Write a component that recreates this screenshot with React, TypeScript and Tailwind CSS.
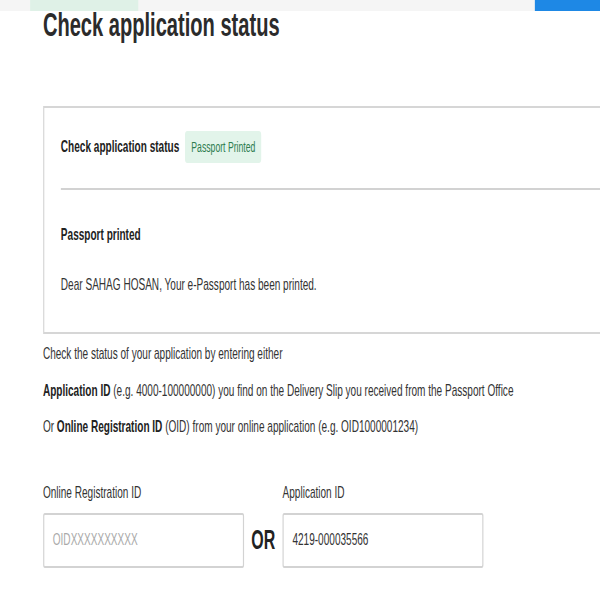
import React from "react";

export default function App() {
  return (
    <div className="w-[600px] h-[600px] overflow-hidden bg-white font-['Liberation_Sans',Arial,sans-serif]">
      <div className="w-[1016px] origin-top-left scale-x-[0.591] text-[17px] text-[#333]">
        {/* top bar */}
        <div className="relative z-10 flex h-[11px] bg-[#f5f5f5]">
          <div className="ml-[51px] w-[183px] bg-[#dff1e7]" />
          <div className="flex-1" />
          <div className="w-[111px] bg-[#1e88e5]" />
        </div>

        <div className="pl-[72.6px]">
          <h1 className="mt-[-4.3px] text-[34px] leading-[34px] font-bold text-[#2b2b2b]">
            Check application status
          </h1>

          {/* card */}
          <div className="mt-[65.3px] w-[1020px] border-2 border-[#d6d6d6] pl-[28.4px] pt-[23px] pb-[37px]">
            <div className="flex items-center gap-[10.2px]">
              <span className="font-bold text-[#222] leading-5">Check application status</span>
              <span className="flex h-[32px] items-center rounded-[4px] bg-[#e2f4ea] px-[10.2px] text-[14.7px] text-[#2e7d4f]">
                Passport Printed
              </span>
            </div>
            <div className="mt-[25px] h-[2px] bg-[#d2d2d2]" />
            <div className="mt-[35px] font-bold text-[#222] leading-5">Passport printed</div>
            <div className="mt-[30px] leading-5">Dear SAHAG HOSAN, Your e-Passport has been printed.</div>
          </div>

          {/* instructions */}
          <div className="mt-[2px] leading-[36.5px]">
            <div>Check the status of your application by entering either</div>
            <div>
              <span className="font-bold text-[#222]">Application ID</span> (e.g. 4000-100000000) you find on the Delivery Slip you received from the Passport Office
            </div>
            <div>
              Or <span className="font-bold text-[#222]">Online Registration ID</span> (OID) from your online application (e.g. OID1000001234)
            </div>
          </div>

          {/* inputs */}
          <div className="mt-[37px] flex items-end">
            <div className="flex flex-col">
              <label className="leading-5">Online Registration ID</label>
              <div className="mt-[10px] flex h-[55px] w-[340px] items-center rounded-[3px] border-2 border-[#d3d3d3] pl-[14.7px] text-[#aaa]">
                OIDXXXXXXXXXX
              </div>
            </div>
            <div className="mx-[12.5px] flex h-[55px] items-center text-[27px] font-bold text-[#222]">OR</div>
            <div className="flex flex-col">
              <label className="leading-5">Application ID</label>
              <div className="mt-[10px] flex h-[55px] w-[340px] items-center rounded-[3px] border-2 border-[#d3d3d3] pl-[14.7px] text-[#333]">
                4219-000035566
              </div>
            </div>
          </div>
        </div>
      </div>
    </div>
  );
}
